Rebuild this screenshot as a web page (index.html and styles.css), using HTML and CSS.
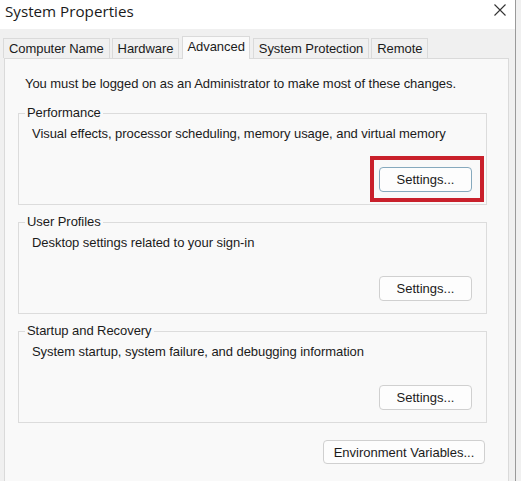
FILE: index.html
```html
<!DOCTYPE html>
<html>
<head>
<meta charset="utf-8">
<link rel="stylesheet" href="styles.css">
</head>
<body>
<div class="window">
  <div class="titlebar">
    <span class="title">System Properties</span>
    <svg class="close" width="12" height="12" viewBox="0 0 12 12"><path d="M0.5 0.5 L11.5 11.5 M11.5 0.5 L0.5 11.5" stroke="#333" stroke-width="1.1" fill="none"/></svg>
  </div>
  <div class="tabs">
    <div class="tab">Computer Name</div>
    <div class="tab">Hardware</div>
    <div class="tab active">Advanced</div>
    <div class="tab">System Protection</div>
    <div class="tab">Remote</div>
  </div>
  <div class="panel">
    <p class="intro">You must be logged on as an Administrator to make most of these changes.</p>
    <fieldset class="group">
      <legend>Performance</legend>
      <p class="desc">Visual effects, processor scheduling, memory usage, and virtual memory</p>
      <div class="actions"><span class="highlight"><button class="btn focused">Settings...</button></span></div>
    </fieldset>
    <fieldset class="group">
      <legend>User Profiles</legend>
      <p class="desc">Desktop settings related to your sign-in</p>
      <div class="actions"><button class="btn">Settings...</button></div>
    </fieldset>
    <fieldset class="group">
      <legend>Startup and Recovery</legend>
      <p class="desc">System startup, system failure, and debugging information</p>
      <div class="actions"><button class="btn">Settings...</button></div>
    </fieldset>
    <div class="env"><button class="btn wide">Environment Variables...</button></div>
  </div>
</div>
</body>
</html>
```

FILE: styles.css
```css
html, body {
  margin: 0;
  padding: 0;
  background: #f0f0f0;
}
.window {
  width: 515px;
  height: 481px;
  background: #f0f0f0;
  border-right: 1px solid #9a9a9a;
  overflow: hidden;
  font-family: "Liberation Sans", Arial, sans-serif;
  font-size: 13px;
  letter-spacing: -0.06px;
  color: #1b1b1b;
}
.titlebar {
  height: 29px;
  background: #ffffff;
  display: flex;
  align-items: flex-start;
  justify-content: space-between;
  padding: 0 9px 0 5px;
}
.title {
  font-family: "Open Sans", "Liberation Sans", sans-serif;
  font-size: 15.2px;
  letter-spacing: 0;
  line-height: 20px;
  margin-top: 1px;
  color: #1a1a1a;
}
.close {
  margin-top: 4px;
}
.tabs {
  display: flex;
  align-items: flex-end;
  height: 29px;
  padding-left: 3px;
  gap: 2px;
}
.tab {
  height: 19px;
  line-height: 19px;
  padding: 0 5px;
  border: 1px solid #dadada;
  border-bottom: none;
  background: #f0f0f0;
  white-space: nowrap;
}
.tab.active {
  height: 22px;
  line-height: 20px;
  padding: 0 4px;
  margin: 0 1px;
  background: #fafafa;
  position: relative;
  top: 1px;
}
.panel {
  margin-left: 4px;
  width: 505px;
  height: 430px;
  box-sizing: border-box;
  background: #f9f9f9;
  border: 1px solid #dadada;
  padding: 17px 21px 0 13px;
}
.intro {
  margin: 0 0 13px 7px;
  line-height: 16px;
}
.group {
  margin: 0 0 9px 0;
  padding: 5px 14px 12px 13px;
  border: 1px solid #dcdcdc;
  min-inline-size: 0;
  width: 469px;
  box-sizing: border-box;
}
.group legend {
  margin-left: -7px;
  padding: 0 2px;
  line-height: 16px;
}
.desc {
  margin: 0 0 25px 0;
  line-height: 16px;
}
.actions {
  display: flex;
  justify-content: flex-end;
}
.btn {
  font: inherit;
  color: #1b1b1b;
  width: 93px;
  height: 25px;
  background: #fdfdfd;
  border: 1px solid #d0d0d0;
  border-radius: 4px;
  padding: 0;
}
.btn.focused {
  border: 1.5px solid #86a9bd;
}
.btn.wide {
  width: 162px;
  height: 24px;
}
.highlight {
  position: relative;
  display: inline-block;
  line-height: 0;
}
.highlight::after {
  content: "";
  position: absolute;
  top: -11px;
  left: -9px;
  right: -12px;
  bottom: -10px;
  border: 4px solid #c9202b;
}
.env {
  display: flex;
  justify-content: flex-end;
  padding-right: 2px;
  margin-top: 17px;
}
```
